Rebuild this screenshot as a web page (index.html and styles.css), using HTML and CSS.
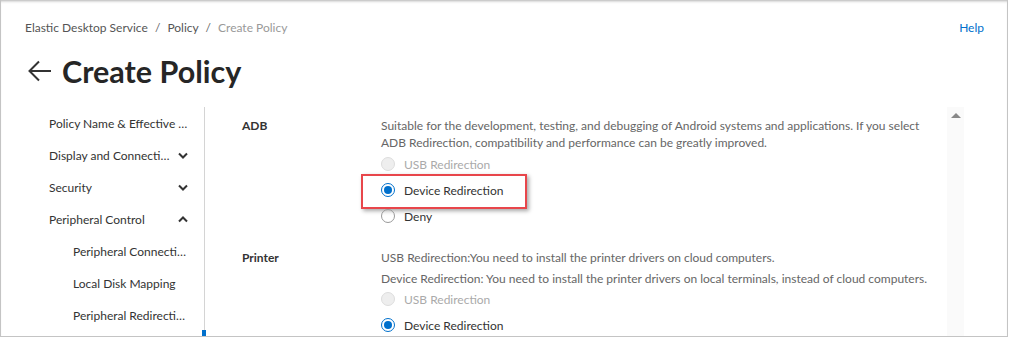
FILE: index.html
```html
<!DOCTYPE html>
<html lang="en">
<head>
    <meta charset="UTF-8">
    <title>Create Policy</title>
    <link rel="stylesheet" href="styles.css">
</head>
<body>
    <div class="frame">
        <div class="header">
            <div class="breadcrumb">
                <span>Elastic Desktop Service</span>
                <span class="sep">/</span>
                <span>Policy</span>
                <span class="sep">/</span>
                <span class="current">Create Policy</span>
            </div>
            <a class="help">Help</a>
        </div>
        <div class="title">
            <svg class="back" width="24" height="22" viewBox="0 0 24 22">
                <path d="M23 11H2M11 1.5L1.5 11L11 20.5" fill="none" stroke="#333" stroke-width="2"/>
            </svg>
            <h1>Create Policy</h1>
        </div>
        <div class="main">
            <div class="sidebar">
                <div class="nav-item"><span class="nav-text">Policy Name &amp; Effective Scope</span></div>
                <div class="nav-item"><span class="nav-text">Display and Connection</span>
                    <svg class="chev" width="10" height="7" viewBox="0 0 10 7"><path d="M1 1.5L5 5.5L9 1.5" fill="none" stroke="#333" stroke-width="2"/></svg>
                </div>
                <div class="nav-item"><span class="nav-text">Security</span>
                    <svg class="chev" width="10" height="7" viewBox="0 0 10 7"><path d="M1 1.5L5 5.5L9 1.5" fill="none" stroke="#333" stroke-width="2"/></svg>
                </div>
                <div class="nav-item"><span class="nav-text">Peripheral Control</span>
                    <svg class="chev" width="10" height="7" viewBox="0 0 10 7"><path d="M1 5.5L5 1.5L9 5.5" fill="none" stroke="#333" stroke-width="2"/></svg>
                </div>
                <div class="nav-item sub"><span class="nav-text">Peripheral Connection</span></div>
                <div class="nav-item sub"><span class="nav-text">Local Disk Mapping</span></div>
                <div class="nav-item sub"><span class="nav-text">Peripheral Redirection</span></div>
                <div class="active-bar"></div>
            </div>
            <div class="content">
                <div class="row adb">
                    <div class="label">ADB</div>
                    <div class="field">
                        <p class="desc">Suitable for the development, testing, and debugging of Android systems and applications. If you select ADB Redirection, compatibility and performance can be greatly improved.</p>
                        <div class="radio disabled"><span class="dot"></span>USB Redirection</div>
                        <div class="radio checked highlight"><span class="dot"></span>Device Redirection<span class="mark"></span></div>
                        <div class="radio"><span class="dot"></span>Deny</div>
                    </div>
                </div>
                <div class="row printer">
                    <div class="label">Printer</div>
                    <div class="field">
                        <p class="desc">USB Redirection:You need to install the printer drivers on cloud computers.</p>
                        <p class="desc">Device Redirection: You need to install the printer drivers on local terminals, instead of cloud computers.</p>
                        <div class="radios">
                            <div class="radio disabled"><span class="dot"></span>USB Redirection</div>
                            <div class="radio checked"><span class="dot"></span>Device Redirection</div>
                        </div>
                    </div>
                </div>
            </div>
            <div class="scrollbar">
                <span class="arrow-up"></span>
            </div>
        </div>
    </div>
</body>
</html>
```

FILE: styles.css
```css
body {
    margin: 0;
    background: #fff;
    font-family: "Lato", "Open Sans", sans-serif;
    font-size: 12px;
    color: #333;
}
.frame {
    width: 1008px;
    height: 337px;
    box-sizing: border-box;
    border: 1px solid #c4c4c4;
    border-top: none;
    box-shadow: inset 0 3px 3px -2px #b0b0b0;
    overflow: hidden;
}
.header {
    display: flex;
    justify-content: space-between;
    align-items: center;
    padding: 19px 23px 0 24px;
    height: 17px;
}
.breadcrumb span {
    color: #555;
}
.breadcrumb .sep {
    margin: 0 4px;
    color: #666;
}
.breadcrumb .current {
    color: #999;
}
.help {
    color: #0070cc;
}
.title {
    display: flex;
    align-items: center;
    padding: 0 0 0 27px;
    margin-top: 18px;
    height: 34px;
}
.back {
    margin-right: 10px;
}
.title h1 {
    margin: 0;
    font-size: 30.5px;
    font-weight: 700;
    color: #262626;
}
.main {
    display: flex;
    margin-top: 19px;
    height: 229px;
}
.sidebar {
    position: relative;
    width: 155px;
    flex: none;
    padding-left: 48px;
    border-right: 1px solid #d4d4d4;
}
.nav-item {
    display: flex;
    align-items: center;
    justify-content: space-between;
    height: 32px;
    padding-right: 16px;
    color: #333;
}
.nav-item.sub {
    padding-left: 24px;
}
.nav-text {
    white-space: nowrap;
    overflow: hidden;
    text-overflow: ellipsis;
    flex: 1;
    min-width: 0;
}
.chev {
    flex: none;
    margin-left: 6px;
}
.active-bar {
    position: absolute;
    right: -2px;
    bottom: 0;
    width: 4px;
    height: 6px;
    background: #0070cc;
}
.content {
    flex: 1;
    padding: 10px 0 0 37px;
}
.row {
    display: flex;
}
.row.printer {
    margin-top: 20px;
}
.label {
    width: 139px;
    flex: none;
    font-weight: 700;
    color: #333;
    line-height: 17px;
}
.field {
    width: 560px;
}
.desc {
    margin: 0;
    line-height: 17px;
    color: #666;
}
.printer .desc + .desc {
    margin-top: 4px;
}
.radios {
    margin-top: -1px;
}
.radio {
    position: relative;
    display: flex;
    align-items: center;
    height: 26px;
    color: #333;
}
.radio .dot {
    width: 12px;
    height: 12px;
    border: 1px solid #999;
    border-radius: 50%;
    margin-right: 9px;
    box-sizing: content-box;
    position: relative;
}
.radio.disabled {
    color: #aaa;
}
.radio.disabled .dot {
    background: #eee;
    border-color: #ddd;
}
.radio.checked .dot {
    border-color: #0070cc;
}
.radio.checked .dot::after {
    content: "";
    position: absolute;
    left: 2px;
    top: 2px;
    width: 8px;
    height: 8px;
    border-radius: 50%;
    background: #0070cc;
}
.radio .mark {
    position: absolute;
    left: -20px;
    top: -3px;
    width: 162px;
    height: 31px;
    border: 2px solid #e8464b;
    box-shadow: 2px 2px 4px rgba(0, 0, 0, 0.35);
}
.scrollbar {
    width: 17px;
    flex: none;
    background: #fafafa;
    margin-right: 43px;
    display: flex;
    justify-content: center;
    padding-top: 6px;
    box-sizing: border-box;
}
.arrow-up {
    width: 0;
    height: 0;
    border-left: 5px solid transparent;
    border-right: 5px solid transparent;
    border-bottom: 5px solid #888;
}
```
